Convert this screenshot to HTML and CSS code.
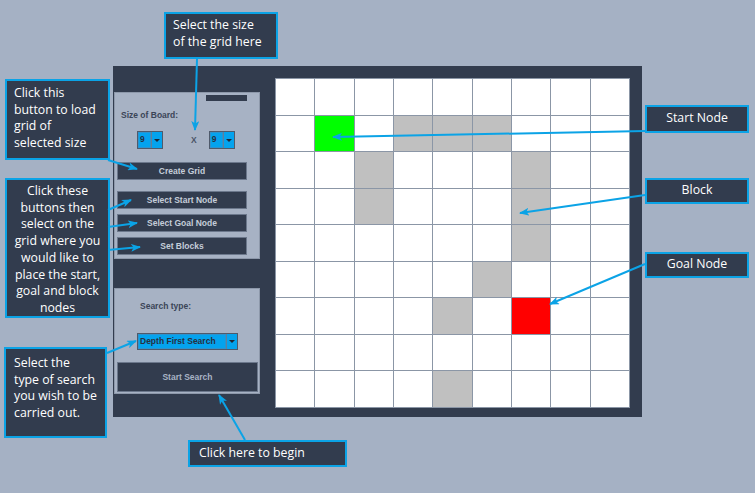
FILE: index.html
```html
<!DOCTYPE html>
<html lang="en">
<head>
<meta charset="utf-8">
<title>Pathfinding Grid</title>
<link rel="stylesheet" href="styles.css">
</head>
<body>
<div class="stage">
  <div class="app">
    <div class="side">
      <section class="panel panel-board">
        <div class="bar"></div>
        <div class="label label-board">Size of Board:</div>
        <div class="size-row">
          <div class="dd dd-small"><span class="dd-val">9</span><span class="dd-arrow"></span></div>
          <span class="times">X</span>
          <div class="dd dd-small"><span class="dd-val">9</span><span class="dd-arrow"></span></div>
        </div>
        <button class="btn btn-create">Create Grid</button>
        <button class="btn btn-first">Select Start Node</button>
        <button class="btn btn-next">Select Goal Node</button>
        <button class="btn btn-next">Set Blocks</button>
      </section>
      <section class="panel panel-search">
        <div class="label label-search">Search type:</div>
        <div class="dd dd-wide"><span class="dd-val">Depth First Search</span><span class="dd-arrow"></span></div>
        <button class="btn btn-start">Start Search</button>
      </section>
    </div>
    <div class="grid">
      <div class="cell"></div><div class="cell"></div><div class="cell"></div><div class="cell"></div><div class="cell"></div><div class="cell"></div><div class="cell"></div><div class="cell"></div><div class="cell"></div>
      <div class="cell"></div><div class="cell start"></div><div class="cell"></div><div class="cell block"></div><div class="cell block"></div><div class="cell block"></div><div class="cell"></div><div class="cell"></div><div class="cell"></div>
      <div class="cell"></div><div class="cell"></div><div class="cell block"></div><div class="cell"></div><div class="cell"></div><div class="cell"></div><div class="cell block"></div><div class="cell"></div><div class="cell"></div>
      <div class="cell"></div><div class="cell"></div><div class="cell block"></div><div class="cell"></div><div class="cell"></div><div class="cell"></div><div class="cell block"></div><div class="cell"></div><div class="cell"></div>
      <div class="cell"></div><div class="cell"></div><div class="cell"></div><div class="cell"></div><div class="cell"></div><div class="cell"></div><div class="cell block"></div><div class="cell"></div><div class="cell"></div>
      <div class="cell"></div><div class="cell"></div><div class="cell"></div><div class="cell"></div><div class="cell"></div><div class="cell block"></div><div class="cell"></div><div class="cell"></div><div class="cell"></div>
      <div class="cell"></div><div class="cell"></div><div class="cell"></div><div class="cell"></div><div class="cell block"></div><div class="cell"></div><div class="cell goal"></div><div class="cell"></div><div class="cell"></div>
      <div class="cell"></div><div class="cell"></div><div class="cell"></div><div class="cell"></div><div class="cell"></div><div class="cell"></div><div class="cell"></div><div class="cell"></div><div class="cell"></div>
      <div class="cell"></div><div class="cell"></div><div class="cell"></div><div class="cell"></div><div class="cell block"></div><div class="cell"></div><div class="cell"></div><div class="cell"></div><div class="cell"></div>
    </div>
  </div>

  <div class="note note-size">Select the size<br>of the grid here</div>
  <div class="note note-load">Click this<br>button to load<br>grid of<br>selected size</div>
  <div class="note note-buttons">Click these<br>buttons then<br>select on the<br>grid where you<br>would like to<br>place the start,<br>goal and block<br>nodes</div>
  <div class="note note-type">Select the<br>type of search<br>you wish to be<br>carried out.</div>
  <div class="note note-begin">Click here to begin</div>
  <div class="note note-tag note-startnode">Start Node</div>
  <div class="note note-tag note-block">Block</div>
  <div class="note note-tag note-goal">Goal Node</div>

  <svg class="arrows" width="755" height="493" viewBox="0 0 755 493" xmlns="http://www.w3.org/2000/svg">
    <defs>
      <marker id="head" markerUnits="userSpaceOnUse" markerWidth="10" markerHeight="8" refX="9" refY="4" orient="auto">
        <path d="M0,0 L10,4 L0,8 L2.5,4 z" fill="#0ba3e6"/>
      </marker>
    </defs>
    <g stroke="#0ba3e6" stroke-width="2" fill="none" marker-end="url(#head)">
      <line x1="197" y1="59" x2="195" y2="130"/>
      <line x1="108" y1="160" x2="137" y2="169"/>
      <line x1="108" y1="210" x2="131" y2="200"/>
      <line x1="108" y1="227" x2="137" y2="223"/>
      <line x1="108" y1="250" x2="140" y2="247"/>
      <line x1="107" y1="353" x2="136" y2="341"/>
      <line x1="245" y1="440" x2="219" y2="395"/>
      <line x1="645" y1="131" x2="333" y2="137"/>
      <line x1="645" y1="195" x2="520" y2="213"/>
      <line x1="645" y1="264" x2="550" y2="304"/>
    </g>
  </svg>
</div>
</body>
</html>
```
FILE: styles.css
```css
* { box-sizing: border-box; }

html, body {
  margin: 0;
  padding: 0;
  background: #a5b1c4;
}

.stage {
  position: relative;
  width: 755px;
  height: 493px;
  padding: 66px 0 0 113px;
  overflow: hidden;
  font-family: "Liberation Sans", Arial, sans-serif;
}

.app {
  display: flex;
  width: 529px;
  height: 351px;
  background: #323c4e;
}

.side {
  display: flex;
  flex-direction: column;
  width: 146px;
  margin-left: 1px;
  padding-top: 26px;
  gap: 29px;
}

.panel {
  display: flex;
  flex-direction: column;
  align-items: flex-start;
  background: #a7b2c4;
  border: 1px solid #8d98aa;
}

.panel-board {
  height: 167px;
  padding: 2px 12px 3px 2px;
}

.panel-search {
  height: 106px;
  padding: 0 1px 1px 2px;
}

.bar {
  align-self: flex-end;
  width: 41px;
  height: 6px;
  background: #323c4e;
}

.label {
  font-size: 8.5px;
  line-height: 10px;
  font-weight: bold;
  color: #3b4557;
  white-space: nowrap;
}

.label-board {
  margin: 9px 0 0 4px;
}

.label-search {
  margin: 12px 0 0 23px;
}

.size-row {
  display: flex;
  align-items: center;
  height: 18px;
  margin: 11px 0 0 20px;
}

.times {
  margin: 0 12px 0 28px;
  font-size: 8.5px;
  font-weight: bold;
  color: #4a5466;
}

.dd {
  display: flex;
  background: #04a3ee;
  border: 1px solid #4f5a6b;
}

.dd-small {
  width: 26px;
  height: 18px;
}

.dd-wide {
  width: 101px;
  height: 17px;
  margin: 22px 0 0 20px;
}

.dd-val {
  flex: 1;
  padding-left: 2px;
  border-right: 1px solid #5f7f9c;
  box-shadow: inset 0 0 0 1px #2b93cf;
  font-size: 8.5px;
  font-weight: bold;
  line-height: 15px;
  color: #27303f;
  white-space: nowrap;
  overflow: hidden;
}

.dd-arrow {
  display: flex;
  align-items: center;
  justify-content: center;
  width: 10px;
}

.dd-arrow::before {
  content: "";
  border-top: 3px solid #1e2736;
  border-left: 3px solid transparent;
  border-right: 3px solid transparent;
}

.btn {
  display: block;
  width: 130px;
  height: 18px;
  padding: 0;
  background: #323c4e;
  border: 1px solid #6c788c;
  color: #c5cdd9;
  font-family: "Liberation Sans", Arial, sans-serif;
  font-size: 8.5px;
  font-weight: bold;
  text-align: center;
}

.btn-create { margin-top: 13px; }
.btn-first { margin-top: 11px; }
.btn-next { margin-top: 5px; }

.btn-start {
  width: 141px;
  height: 30px;
  margin-top: 12px;
  color: #a8b3c4;
}

.grid {
  display: grid;
  grid-template-columns: repeat(9, 1fr);
  grid-template-rows: repeat(9, 1fr);
  gap: 1px;
  width: 355px;
  height: 330px;
  margin: 12px 0 0 15px;
  padding: 1px;
  background: #8b96a6;
}

.cell { background: #ffffff; }
.cell.block { background: #c0c0c0; }
.cell.start { background: #00ff00; }
.cell.goal { background: #ff0000; }

.note {
  position: absolute;
  background: #323c4e;
  border: 2px solid #0ba3e6;
  color: #ffffff;
  font-family: "Open Sans", "Noto Sans", sans-serif;
  font-size: 12.3px;
  line-height: 16.7px;
  white-space: nowrap;
}

.note-size { left: 164px; top: 12px; width: 114px; height: 47px; padding: 3px 0 0 7px; }
.note-load { left: 5px; top: 79px; width: 105px; height: 81px; padding: 4px 0 0 7px; }
.note-buttons { left: 5px; top: 178px; width: 105px; height: 140px; padding-top: 3px; text-align: center; }
.note-type { left: 4px; top: 347px; width: 103px; height: 91px; padding: 6px 0 0 8px; }
.note-begin { left: 188px; top: 440px; width: 159px; height: 27px; padding: 3px 0 0 9px; }

.note-tag {
  left: 645px;
  width: 104px;
  height: 27px;
  padding-top: 3px;
  text-align: center;
}

.note-startnode { top: 105px; height: 28px; }
.note-block { top: 178px; height: 26px; padding-top: 2px; }
.note-goal { top: 252px; height: 26px; padding-top: 2px; }

.arrows {
  position: absolute;
  left: 0;
  top: 0;
  pointer-events: none;
}
```
